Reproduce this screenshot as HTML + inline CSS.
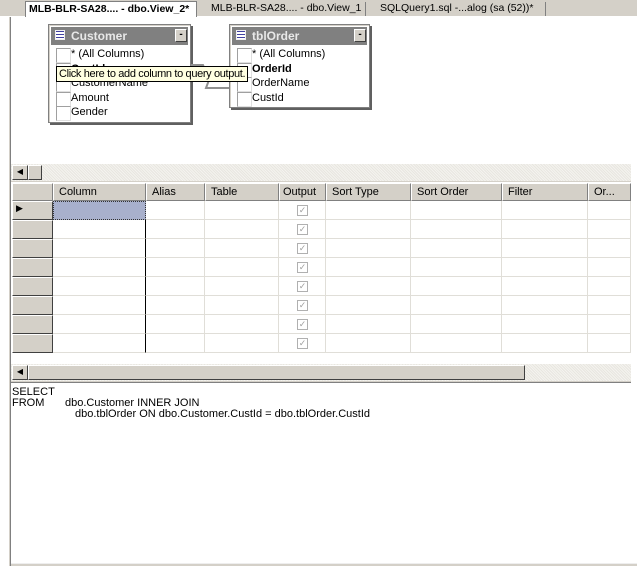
<!DOCTYPE html>
<html><head><style>
*{margin:0;padding:0;box-sizing:border-box}
body{width:637px;height:568px;background:#fff;position:relative;overflow:hidden;font-family:"Liberation Sans",sans-serif;font-size:11px;color:#000}
.a{position:absolute;white-space:nowrap}
.hatch{background:repeating-linear-gradient(45deg,#e8e6e0 0 1px,#f4f3ef 1px 2px)}
.btn{background:#d4d0c8;border:1px solid;border-color:#fff #404040 #404040 #fff}
.tbl{background:#fff;border:1px solid #808080;box-shadow:2px 2px 0 #606060, inset 1px 1px 0 #d4d0c8}
.title{background:#808080;color:#e8e8e8;font-weight:bold;font-size:12px;height:18px;line-height:18px;padding-left:20px}
.row{height:14.5px;line-height:14px;padding-left:20px;position:relative;white-space:nowrap}
.row:before{content:"";position:absolute;left:5px;top:1px;width:13px;height:13px;border:1px solid #a0a0a0;border-right-color:#e0e0e0;border-bottom-color:#e0e0e0;background:#fff}
.cell{position:absolute;border-right:1px solid #e0ded8;border-bottom:1px solid #e0ded8;height:19px}
.hdr{position:absolute;top:183px;height:18px;background:#d4d0c8;border:1px solid;border-color:#fff #808080 #808080 #fff;line-height:16px;padding-left:5px;white-space:nowrap}
.rh{position:absolute;left:12px;width:41px;height:19px;background:#d4d0c8;border:1px solid;border-color:#fff #404040 #404040 #fff}
.chk{position:absolute;width:11px;height:11px;border:1px solid #b0b0b0;font-size:9px;line-height:9px;color:#a0a0a0;text-align:center}
.mn{font-size:10px;line-height:9px;text-align:center;font-weight:bold}
</style></head><body>
<div class="a" style="left:0;top:0;width:637px;height:17px;background:#d4d0c8"></div>
<div class="a" style="left:0;top:16px;width:637px;height:1px;background:#fff"></div>
<div class="a" style="left:25px;top:1px;width:172px;height:16px;background:#fff;border:1px solid #808080;border-bottom:none;font-weight:bold;line-height:14px;padding-left:3px;font-size:10.5px">MLB-BLR-SA28.... - dbo.View_2*</div>
<div class="a" style="left:198px;top:2px;width:168px;height:14px;border-right:1px solid #808080;line-height:12px;padding-left:13px;font-size:10.5px">MLB-BLR-SA28.... - dbo.View_1</div>
<div class="a" style="left:366px;top:2px;width:180px;height:14px;border-right:1px solid #808080;line-height:12px;padding-left:14px;font-size:10.5px">SQLQuery1.sql -...alog (sa (52))*</div>
<div class="a" style="left:9px;top:17px;width:2px;height:549px;background:#808080;border-left:1px solid #d4d0c8"></div>
<div class="a" style="left:11px;top:563px;width:626px;height:3px;background:#d4d0c8;border-top:1px solid #eee"></div>

<div class="a tbl" style="left:48px;top:24px;width:143px;height:99px;padding:2px">
<div class="title">Customer</div>
<div style="padding-top:2px">
<div class="row">* (All Columns)</div>
<div class="row" style="font-weight:bold">CustId</div>
<div class="row">CustomerName</div>
<div class="row">Amount</div>
<div class="row">Gender</div></div>
</div>
<div class="a tbl" style="left:229px;top:24px;width:141px;height:84px;padding:2px">
<div class="title">tblOrder</div>
<div style="padding-top:2px">
<div class="row">* (All Columns)</div>
<div class="row" style="font-weight:bold">OrderId</div>
<div class="row">OrderName</div>
<div class="row">CustId</div></div>
</div>
<div class="a" style="left:55px;top:30px;width:10px;height:10px;border:1px solid #eee;background:repeating-linear-gradient(#4040a0 0 1px,#fff 1px 3px)"></div>
<div class="a" style="left:236px;top:30px;width:10px;height:10px;border:1px solid #eee;background:repeating-linear-gradient(#4040a0 0 1px,#fff 1px 3px)"></div>
<div class="a btn mn" style="left:175px;top:29px;width:12px;height:13px">-</div>
<div class="a btn mn" style="left:354px;top:29px;width:12px;height:13px">-</div>
<svg class="a" style="left:191px;top:60px" width="40" height="40"><path d="M0 5 H12 L18 20 L15 28 H38" fill="none" stroke="#909090" stroke-width="2"/></svg>
<div class="a" style="left:56px;top:66px;width:192px;height:16px;background:#ffffe1;border:1px solid #000;line-height:14px;padding-left:2px;overflow:hidden;letter-spacing:-0.35px">Click here to add column to query output.</div>

<div class="a hatch" style="left:11px;top:164px;width:620px;height:17px"></div>
<div class="a btn" style="left:12px;top:165px;width:16px;height:15px;font-size:8px;line-height:12px;text-align:center">◀</div>
<div class="a btn" style="left:28px;top:165px;width:14px;height:15px"></div>
<div class="a" style="left:11px;top:181px;width:620px;height:1px;background:#d4d0c8"></div>

<div class="hdr" style="left:12px;width:41px"></div>
<div class="hdr" style="left:53px;width:93px">Column</div>
<div class="hdr" style="left:146px;width:59px">Alias</div>
<div class="hdr" style="left:205px;width:74px">Table</div>
<div class="hdr" style="left:279px;width:47px;padding-left:3px">Output</div>
<div class="hdr" style="left:326px;width:85px">Sort Type</div>
<div class="hdr" style="left:411px;width:91px">Sort Order</div>
<div class="hdr" style="left:502px;width:86px">Filter</div>
<div class="hdr" style="left:588px;width:43px">Or...</div>
<div id="g"></div>
<script>
var h='',cols=[[53,93],[146,59],[205,74],[279,47],[326,85],[411,91],[502,86],[588,43]];
for(var r=0;r<8;r++){var y=201+r*19;
h+='<div class="rh" style="top:'+y+'px"></div>';
cols.forEach(function(c,i){h+='<div class="cell" style="left:'+c[0]+'px;top:'+y+'px;width:'+c[1]+'px;'+(i==0?'border-right:1px solid #000;':'')+(i==0&&r==0?'background:#a8b0cc;border:1px dotted #333;':'')+'"></div>';});
h+='<div class="chk" style="left:297px;top:'+(y+4)+'px">✓</div>';}
document.getElementById('g').innerHTML=h;
</script>
<div class="a" style="left:16px;top:203px;font-size:9px">▶</div>

<div class="a hatch" style="left:11px;top:364px;width:620px;height:17px"></div>
<div class="a btn" style="left:12px;top:365px;width:16px;height:15px;font-size:8px;line-height:12px;text-align:center">◀</div>
<div class="a btn" style="left:28px;top:365px;width:497px;height:15px"></div>
<div class="a" style="left:11px;top:381px;width:620px;height:2px;background:#808080;border-top:1px solid #d4d0c8"></div>

<div class="a" style="left:12px;top:386px">SELECT</div>
<div class="a" style="left:12px;top:397px">FROM</div>
<div class="a" style="left:65px;top:397px">dbo.Customer INNER JOIN</div>
<div class="a" style="left:75px;top:408px">dbo.tblOrder ON dbo.Customer.CustId = dbo.tblOrder.CustId</div>
</body></html>
